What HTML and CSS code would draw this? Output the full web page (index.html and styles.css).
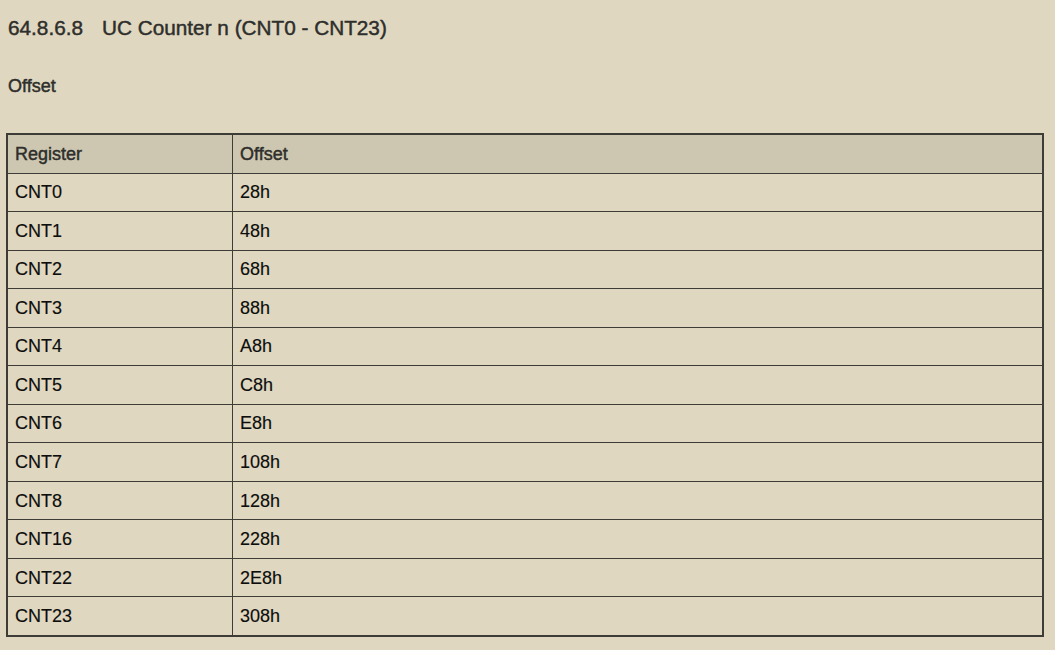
FILE: index.html
```html
<!DOCTYPE html>
<html lang="en">
<head>
<meta charset="utf-8">
<title>UC Counter n</title>
<link rel="stylesheet" href="styles.css">
</head>
<body>
<h1 class="title"><span class="num">64.8.6.8</span>UC Counter n (CNT0 - CNT23)</h1>
<h2 class="sub">Offset</h2>
<table class="regs">
  <thead>
    <tr><th class="c1">Register</th><th>Offset</th></tr>
  </thead>
  <tbody>
    <tr><td class="c1">CNT0</td><td>28h</td></tr>
    <tr><td class="c1">CNT1</td><td>48h</td></tr>
    <tr><td class="c1">CNT2</td><td>68h</td></tr>
    <tr><td class="c1">CNT3</td><td>88h</td></tr>
    <tr><td class="c1">CNT4</td><td>A8h</td></tr>
    <tr><td class="c1">CNT5</td><td>C8h</td></tr>
    <tr><td class="c1">CNT6</td><td>E8h</td></tr>
    <tr><td class="c1">CNT7</td><td>108h</td></tr>
    <tr><td class="c1">CNT8</td><td>128h</td></tr>
    <tr><td class="c1">CNT16</td><td>228h</td></tr>
    <tr><td class="c1">CNT22</td><td>2E8h</td></tr>
    <tr><td class="c1">CNT23</td><td>308h</td></tr>
  </tbody>
</table>
</body>
</html>
```
FILE: styles.css
```css
html, body {
  margin: 0;
  background: #dfd7c0;
}
body {
  padding-top: 16px;
  font-family: "Liberation Sans", Arial, Helvetica, sans-serif;
  color: #1c1c1c;
}
.title {
  margin: 0 0 0 8px;
  font-size: 20.75px;
  line-height: 24px;
  font-weight: normal;
  color: #2e2e2b;
  -webkit-text-stroke: 0.45px #2e2e2b;
}
.num {
  margin-right: 19px;
}
.sub {
  margin: 35px 0 0 8px;
  font-size: 18px;
  line-height: 22px;
  font-weight: normal;
  color: #2e2e2b;
  -webkit-text-stroke: 0.45px #2e2e2b;
}
.regs {
  margin: 36px 0 0 6px;
  width: 1038px;
  border: 2px solid #3d3c37;
  border-collapse: separate;
  border-spacing: 0;
  font-size: 18px;
  table-layout: fixed;
}
.regs th,
.regs td {
  box-sizing: border-box;
  height: 38.54px;
  padding: 0 7px;
  text-align: left;
  vertical-align: middle;
  font-weight: normal;
  border-bottom: 1px solid #3d3c37;
  line-height: 20px;
}
.regs th {
  background: #cdc7b1;
  color: #2e2e2b;
  -webkit-text-stroke: 0.45px #2e2e2b;
}
.regs td {
  color: #0d0d0d;
  -webkit-text-stroke: 0.15px #0d0d0d;
}
.regs .c1 {
  width: 225px;
  border-right: 1px solid #3d3c37;
}
.regs tbody tr:last-child td {
  border-bottom: none;
  height: 37.54px;
}
```
